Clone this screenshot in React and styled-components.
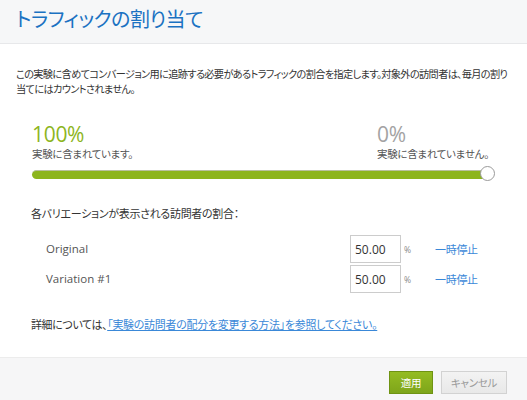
import React from "react";
import styled, { createGlobalStyle } from "styled-components";

const Global = createGlobalStyle`
  html, body { margin: 0; padding: 0; background: #fff; }
  body { font-family: "Noto Sans CJK JP", "Open Sans", sans-serif; }
  * { box-sizing: border-box; }
`;

const JP = `"Noto Sans CJK JP", sans-serif`;
const LAT = `"Open Sans", "Noto Sans CJK JP", sans-serif`;

const Dialog = styled.div`
  width: 527px;
  height: 400px;
  display: flex;
  flex-direction: column;
  background: #fff;
  overflow: hidden;
`;

const Header = styled.header`
  height: 44px;
  flex: none;
  background: #f6f7f8;
  border-bottom: 1px solid #e7e8ea;
  display: flex;
  align-items: center;
  padding: 0 0 6px 16px;
`;

const Title = styled.h1`
  margin: 0;
  font-family: ${JP};
  font-feature-settings: "palt";
  font-weight: 400;
  font-size: 20px;
  letter-spacing: -0.5px;
  color: #1b72c2;
`;

const Body = styled.main`
  flex: 1;
  padding: 22px 16px 0 16px;
  font-family: ${JP};
  font-feature-settings: "palt";
  font-size: 11px;
  color: #333;
`;

const Desc = styled.p`
  margin: 0;
  font-size: 10.2px;
  line-height: 15px;
  letter-spacing: -0.65px;
`;

const Stats = styled.section`
  margin: 27px 16px 0 16px;
`;

const StatRow = styled.div`
  display: flex;
  justify-content: space-between;
`;

const Stat = styled.div`
  width: ${(p) => p.$w || "auto"};
`;

const Big = styled.div`
  font-family: ${LAT};
  font-size: 21px;
  line-height: 22px;
  color: ${(p) => p.$color};
  letter-spacing: -0.3px;
`;

const Small = styled.div`
  margin-top: 1px;
  line-height: 15px;
  font-size: 10.5px;
  color: #555;
  letter-spacing: -0.3px;
`;

const Track = styled.div`
  position: relative;
  margin-top: 9px;
  height: 9px;
  margin-right: 7px;
  border-radius: 5px;
  background: #8db51d;
  border-top: 1px solid #b9c09e;
`;

const Knob = styled.div`
  position: absolute;
  right: -7px;
  top: -5px;
  width: 15px;
  height: 15px;
  border-radius: 50%;
  background: #fff;
  border: 1px solid #9a9a9a;
`;

const Section = styled.section`
  margin: 27px 0 0 15px;
`;

const SectionLabel = styled.div`
  line-height: 15px;
  letter-spacing: -0.3px;
  color: #333;
`;

const Rows = styled.div`
  margin-top: 14px;
  display: flex;
  flex-direction: column;
  gap: 2px;
`;

const Row = styled.div`
  display: grid;
  grid-template-columns: 304px 51px 34px auto;
  align-items: center;
  padding-left: 15px;
  height: 28px;
`;

const Name = styled.span`
  font-family: ${LAT};
  font-size: 11.5px;
  color: #555;
  padding-bottom: 1px;
`;

const Input = styled.input`
  width: 51px;
  height: 28px;
  border: 1px solid #ccc;
  padding: 0 0 0 4px;
  font-family: ${LAT};
  font-size: 12px;
  color: #333;
  background: #fff;
  outline: none;
`;

const Pct = styled.span`
  padding-left: 3px;
  font-family: ${LAT};
  font-size: 8.5px;
  color: #888;
`;

const Link = styled.a`
  color: #3a88d8;
  text-decoration: ${(p) => (p.$underline ? "underline" : "none")};
  letter-spacing: -0.3px;
  cursor: pointer;
`;

const More = styled.p`
  margin: 24px 0 0 0;
  line-height: 15px;
  letter-spacing: -0.4px;
  color: #333;
`;

const Footer = styled.footer`
  height: 43px;
  flex: none;
  background: #f6f6f7;
  border-top: 1px solid #ececec;
  display: flex;
  justify-content: flex-end;
  align-items: flex-start;
  gap: 8px;
  padding: 13px 20px 0 0;
`;

const Button = styled.button`
  height: 23px;
  width: ${(p) => p.$w}px;
  padding: 0;
  font-family: ${JP};
  font-feature-settings: "palt";
  font-size: 10.5px;
  letter-spacing: -0.3px;
  border: 1px solid ${(p) => (p.$primary ? "#6f9313" : "#d2d2d2")};
  color: ${(p) => (p.$primary ? "#fff" : "#9a9a9a")};
  background: ${(p) =>
    p.$primary
      ? "linear-gradient(#94bc22, #7ea51a)"
      : "linear-gradient(#f3f3f3, #e8e8e8)"};
  cursor: pointer;
`;

const variations = [
  { name: "Original", value: "50.00" },
  { name: "Variation #1", value: "50.00" },
];

export default function App() {
  return (
    <>
      <Global />
      <Dialog>
        <Header>
          <Title>トラフィックの割り当て</Title>
        </Header>
        <Body>
          <Desc>
            この実験に含めてコンバージョン用に追跡する必要があるトラフィックの割合を指定します。対象外の訪問者は、毎月の割り当てにはカウントされません。
          </Desc>
          <Stats>
            <StatRow>
              <Stat>
                <Big $color="#8db51d">100%</Big>
                <Small>実験に含まれています。</Small>
              </Stat>
              <Stat $w="118px">
                <Big $color="#a3a3a3">0%</Big>
                <Small>実験に含まれていません。</Small>
              </Stat>
            </StatRow>
            <Track>
              <Knob />
            </Track>
          </Stats>
          <Section>
            <SectionLabel>各バリエーションが表示される訪問者の割合：</SectionLabel>
            <Rows>
              {variations.map((v) => (
                <Row key={v.name}>
                  <Name>{v.name}</Name>
                  <Input defaultValue={v.value} />
                  <Pct>%</Pct>
                  <Link>一時停止</Link>
                </Row>
              ))}
            </Rows>
            <More>
              詳細については、<Link $underline>「実験の訪問者の配分を変更する方法」を参照してください。</Link>
            </More>
          </Section>
        </Body>
        <Footer>
          <Button $primary $w={44}>適用</Button>
          <Button $w={66}>キャンセル</Button>
        </Footer>
      </Dialog>
    </>
  );
}
